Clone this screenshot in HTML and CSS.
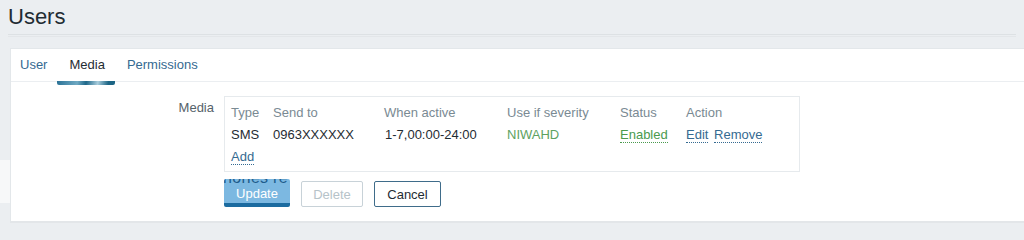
FILE: index.html
```html
<!DOCTYPE html>
<html>
  <head>
    <link rel="stylesheet" href="styles.css">
  </head>
  <body>
    <div class="header">
      <h1 class="header-title">Users</h1>
    </div>

    <div class="container">
      <div class="edge-glitch"></div>
      <ul class="tabs">
        <li class="tab"><a href="#">User</a></li>
        <li class="tab tab-active"><a href="#">Media</a></li>
        <li class="tab"><a href="#">Permissions</a></li>
      </ul>

      <div class="form">
        <div class="form-row">
          <label class="form-label">Media</label>
          <div class="media-box">
            <table class="media-table">
              <thead>
                <tr>
                  <th class="col-type">Type</th>
                  <th class="col-send">Send to</th>
                  <th class="col-when">When active</th>
                  <th class="col-sev">Use if severity</th>
                  <th class="col-status">Status</th>
                  <th>Action</th>
                </tr>
              </thead>
              <tbody>
                <tr>
                  <td>SMS</td>
                  <td>0963XXXXXX</td>
                  <td class="when">1-7,00:00-24:00</td>
                  <td class="severity">NIWAHD</td>
                  <td><a class="link link-green" href="#">Enabled</a></td>
                  <td>
                    <a class="link" href="#">Edit</a>
                    <a class="link" href="#">Remove</a>
                  </td>
                </tr>
                <tr>
                  <td colspan="6"><a class="link" href="#">Add</a></td>
                </tr>
              </tbody>
            </table>
          </div>
        </div>

        <div class="form-buttons">
          <button class="btn btn-primary">
            <span class="ghost-text">nories re</span>
            <span class="btn-label">Update</span>
          </button>
          <button class="btn btn-disabled" disabled>Delete</button>
          <button class="btn btn-alt">Cancel</button>
        </div>
      </div>
    </div>
  </body>
</html>
```

FILE: styles.css
```css
body {
  margin: 0;
  background-color: #ebeef1;
  font-family: "Liberation Sans", Arial, sans-serif;
  font-size: 13px;
  color: #1f2c33;
}

.header {
  height: 48px;
  box-sizing: border-box;
  padding: 0 8px;
}

.header::after {
  content: "";
  display: block;
  height: 1px;
  background-color: #dde1e4;
  box-shadow: 0 2px 0 #e3e6e9;
}

.header-title {
  margin: 0;
  height: 34px;
  font-size: 22px;
  font-weight: normal;
  line-height: 34px;
  color: #1f2c33;
}

.container {
  position: relative;
  margin-left: 10px;
  height: 175px;
  box-sizing: border-box;
  background-color: #ffffff;
  border-top: 1px solid #e3e7ea;
  border-left: 1px solid #e3e7ea;
  border-bottom: 2px solid #e3e6e9;
}

.edge-glitch {
  position: absolute;
  left: -11px;
  top: 111px;
  width: 10px;
  height: 43px;
  background-color: #f7f8f9;
}

.tabs {
  list-style: none;
  margin: 0;
  padding: 0;
  display: flex;
  height: 32px;
  border-bottom: 1px solid #ebeef1;
}

.tab {
  position: relative;
  padding: 0 10px 0 12px;
  line-height: 32px;
}

.tab:first-child {
  padding-left: 9px;
}

.tab a {
  color: #356a91;
  text-decoration: none;
}

.tab-active a {
  color: #1f2c33;
}

.tab-active::after {
  content: "";
  position: absolute;
  left: 0;
  right: 0;
  bottom: -4px;
  height: 4px;
  background: linear-gradient(100deg, #2a7296 0%, #6fa9c3 35%, #1d6789 50%, #a9cddd 70%, #1c6585 88%);
  border-radius: 0 0 2px 2px;
}

.form {
  padding-top: 14px;
}

.form-row {
  display: flex;
}

.form-label {
  width: 203px;
  padding-right: 10px;
  padding-top: 3px;
  text-align: right;
  color: #55626a;
  line-height: 18px;
}

.media-box {
  width: 576px;
  box-sizing: border-box;
  padding: 4px 6px;
  border: 1px solid #e6eaed;
}

.media-table {
  border-collapse: collapse;
}

.media-table th,
.media-table td {
  padding: 0;
  height: 22px;
  text-align: left;
  white-space: nowrap;
}

.media-table th {
  font-weight: normal;
  color: #7a8a93;
}

.col-type { width: 42px; }
.col-send { width: 111px; }
.col-when { width: 123px; }
.col-sev { width: 113px; }
.col-status { width: 66px; }

.when {
  padding-left: 1px !important;
}

.severity {
  color: #5da25f;
}

.link {
  color: #356a91;
  text-decoration: none;
  border-bottom: 1px dotted #356a91;
  margin-right: 2px;
}

.link-green {
  color: #4a9a4e;
  border-bottom-color: #4a9a4e;
}

.form-buttons {
  display: flex;
  align-items: flex-end;
  gap: 11px;
  margin-top: 7px;
  padding-left: 213px;
}

.btn {
  height: 26px;
  box-sizing: border-box;
  padding: 0 11px;
  font-family: inherit;
  font-size: 13px;
  border-radius: 2px;
  background-color: #ffffff;
  cursor: pointer;
}

.btn-primary {
  position: relative;
  width: 66px;
  height: 28px;
  overflow: hidden;
  background-color: #7cb8e1;
  color: #ffffff;
  border: none;
  border-bottom: 4px solid #1b6ba0;
  padding: 6px 0 0;
}

.btn-label {
  display: block;
  line-height: 16px;
}

.ghost-text {
  position: absolute;
  left: -1px;
  top: -9px;
  font-size: 16px;
  line-height: 16px;
  white-space: nowrap;
  color: #1d5c8c;
  letter-spacing: 0.3px;
}

.btn-disabled {
  width: 62px;
  color: #b6c3c9;
  border: 1px solid #c8d2d8;
}

.btn-alt {
  width: 67px;
  color: #1f2c33;
  border: 1px solid #3f6c8a;
}
```
